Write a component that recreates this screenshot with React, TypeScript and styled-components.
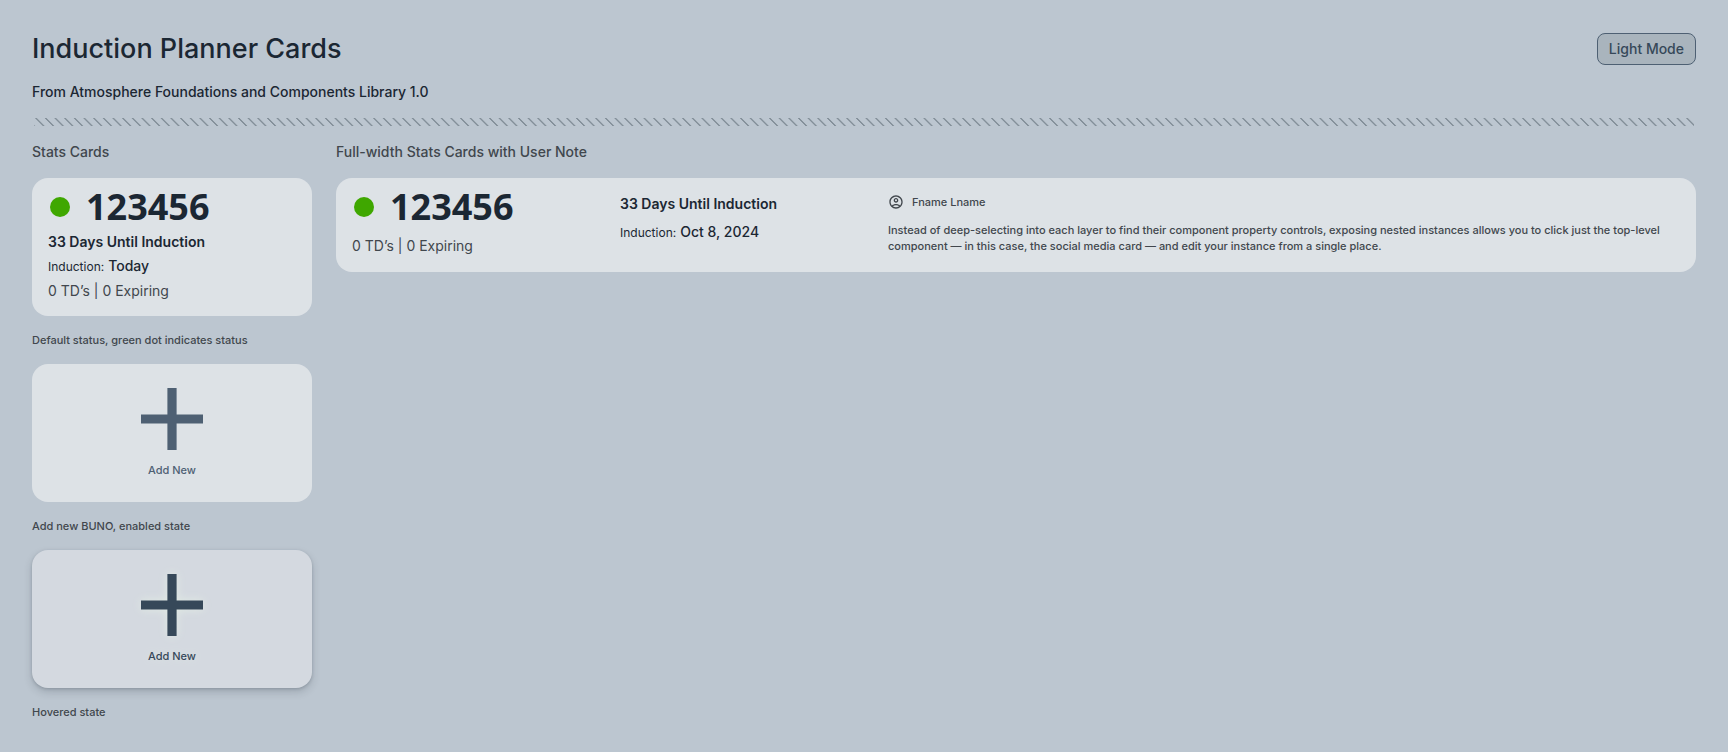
import React, { useId } from "react";
import styled, { createGlobalStyle, css } from "styled-components";

const color = {
  page: "#bcc6d0",
  card: "#dde2e6",
  cardHover: "#d4d9e0",
  ink: "#1b2733",
  muted: "#41474d",
  accent: "#4e6073",
  accentStrong: "#364859",
  status: "#3fa700",
};

const GlobalStyle = createGlobalStyle`
  *, *::before, *::after { box-sizing: border-box; }
  body {
    margin: 0;
    background: ${color.page};
    color: ${color.ink};
    font-family: Inter, "Noto Sans", sans-serif;
    font-size: 14px;
    line-height: 20px;
  }
  h1, h2, h3, p, figure { margin: 0; }
`;

const Page = styled.main`
  display: flex;
  flex-direction: column;
  gap: 16px;
  padding: 32px;
`;

const TitleRow = styled.header`
  display: flex;
  align-items: center;
  justify-content: space-between;
`;

const Title = styled.h1`
  font-size: 27px;
  font-weight: 500;
  line-height: 34px;
`;

const ModeButton = styled.button`
  height: 32px;
  padding: 0 11px;
  border: 1px solid ${color.accent};
  border-radius: 8px;
  background: #a9b4bd;
  color: ${color.accentStrong};
  font: inherit;
  font-weight: 500;
  cursor: pointer;
`;

const Subtitle = styled.p`
  font-weight: 500;
`;

const Divider = styled.div`
  padding: 0 2px;
`;

const HatchSvg = styled.svg`
  display: block;
  width: 100%;
  height: 8px;
`;

const Columns = styled.div`
  display: grid;
  grid-template-columns: 280px minmax(0, 1fr);
  gap: 24px;
  align-items: start;
`;

const Column = styled.section`
  display: flex;
  flex-direction: column;
  gap: 16px;
`;

const SectionTitle = styled.h2`
  color: ${color.muted};
  font-size: 14px;
  font-weight: 500;
`;

const Example = styled.figure`
  display: flex;
  flex-direction: column;
  gap: 16px;
`;

const Caption = styled.figcaption`
  color: ${color.muted};
  font-size: 11px;
  font-weight: 500;
  line-height: 16px;
`;

const cardSurface = css`
  border-radius: 16px;
  background: ${color.card};
`;

const StatsCard = styled.article`
  ${cardSurface}
  min-height: 138px;
  padding: 8px 16px 12px;
`;

const WideCard = styled.article`
  ${cardSurface}
  display: grid;
  grid-template-columns: 244px 244px minmax(0, 1fr);
  gap: 24px;
  min-height: 94px;
  padding: 8px 16px;
`;

const NumberRow = styled.div<{ $spacing: number }>`
  display: flex;
  align-items: center;
  gap: 16px;
  height: 42px;
  margin-bottom: ${(p) => p.$spacing}px;
  padding-left: 2px;
`;

const StatusDot = styled.span`
  width: 20px;
  height: 20px;
  border-radius: 50%;
  background: ${color.status};
`;

const BuNumber = styled.h3`
  font-family: "Noto Sans", sans-serif;
  font-size: 36px;
  font-weight: 700;
  line-height: 40px;
`;

const Countdown = styled.p`
  font-weight: 600;
  line-height: 24px;
`;

const DateLine = styled.p`
  display: flex;
  align-items: baseline;
  gap: 4px;
  font-size: 12px;
  line-height: 24px;
`;

const DateValue = styled.strong`
  font-size: 14px;
  font-weight: 500;
`;

const Totals = styled.p`
  color: ${color.muted};
  line-height: 24px;
`;

const InductionColumn = styled.div`
  display: flex;
  flex-direction: column;
  gap: 4px;
  padding-top: 6px;
`;

const NoteColumn = styled.div`
  display: flex;
  flex-direction: column;
  gap: 12px;
  padding-top: 8px;
  color: ${color.muted};
  font-size: 11px;
  font-weight: 500;
  line-height: 16px;
`;

const Author = styled.p`
  display: flex;
  align-items: center;
  gap: 8px;
`;

const AddCard = styled.button<{ $hovered?: boolean }>`
  ${cardSurface}
  display: flex;
  flex-direction: column;
  align-items: center;
  gap: 12px;
  height: 138px;
  padding: 24px 16px 0;
  border: 0;
  color: ${color.accent};
  font: inherit;
  font-size: 11px;
  font-weight: 500;
  line-height: 16px;
  cursor: pointer;

  ${(p) =>
    p.$hovered &&
    css`
      background: ${color.cardHover};
      box-shadow: 0 4px 8px rgba(27, 39, 51, 0.18), 0 1px 3px rgba(27, 39, 51, 0.18);
      color: ${color.accentStrong};
      text-shadow: 0 0 8px #dde6e2;

      svg {
        filter: drop-shadow(0 0 5px #e2ece4);
      }
    `}
`;

function HatchDivider() {
  const id = useId();
  return (
    <Divider>
      <HatchSvg aria-hidden="true">
        <defs>
          <pattern
            id={id}
            width="9.655"
            height="8"
            patternUnits="userSpaceOnUse"
            patternTransform="translate(0.8 0) skewX(45)"
          >
            <rect width="2" height="8" fill="#84909a" />
          </pattern>
        </defs>
        <rect width="100%" height="8" fill={`url(#${id})`} />
      </HatchSvg>
    </Divider>
  );
}

function PlusIcon() {
  return (
    <svg width="62" height="62" viewBox="0 0 62 62" fill="currentColor" aria-hidden="true">
      <path d="M26.4 0h9.2v26.4H62v9.2H35.6V62h-9.2V35.6H0v-9.2h26.4z" />
    </svg>
  );
}

function AccountIcon() {
  return (
    <svg width="16" height="16" viewBox="0 0 24 24" fill="currentColor" aria-hidden="true">
      <path d="M12 2C6.48 2 2 6.48 2 12s4.48 10 10 10 10-4.48 10-10S17.52 2 12 2zM7.35 18.5C8.66 17.56 10.26 17 12 17s3.34.56 4.65 1.5C15.34 19.44 13.74 20 12 20s-3.34-.56-4.65-1.5zm10.79-1.38C16.45 15.8 14.32 15 12 15s-4.45.8-6.14 2.12C4.7 15.73 4 13.95 4 12c0-4.42 3.58-8 8-8s8 3.58 8 8c0 1.95-.7 3.73-1.86 5.12zM12 6c-1.93 0-3.5 1.57-3.5 3.5S10.07 13 12 13s3.5-1.57 3.5-3.5S13.93 6 12 6zm0 5c-.83 0-1.5-.67-1.5-1.5S11.17 8 12 8s1.5.67 1.5 1.5S12.83 11 12 11z" />
    </svg>
  );
}

function NumberHeading({ value, spacing = 2 }: { value: string; spacing?: number }) {
  return (
    <NumberRow $spacing={spacing}>
      <StatusDot />
      <BuNumber>{value}</BuNumber>
    </NumberRow>
  );
}

function InductionDate({ value }: { value: string }) {
  return (
    <DateLine>
      Induction: <DateValue>{value}</DateValue>
    </DateLine>
  );
}

function AddNewCard({ hovered }: { hovered?: boolean }) {
  return (
    <AddCard type="button" $hovered={hovered}>
      <PlusIcon />
      Add New
    </AddCard>
  );
}

export default function App() {
  return (
    <>
      <GlobalStyle />
      <Page>
        <TitleRow>
          <Title>Induction Planner Cards</Title>
          <ModeButton type="button">Light Mode</ModeButton>
        </TitleRow>
        <Subtitle>From Atmosphere Foundations and Components Library 1.0</Subtitle>
        <HatchDivider />
        <Columns>
          <Column>
            <SectionTitle>Stats Cards</SectionTitle>
            <Example>
              <StatsCard>
                <NumberHeading value="123456" />
                <Countdown>33 Days Until Induction</Countdown>
                <InductionDate value="Today" />
                <Totals>0 TD’s | 0 Expiring</Totals>
              </StatsCard>
              <Caption>Default status, green dot indicates status</Caption>
            </Example>
            <Example>
              <AddNewCard />
              <Caption>Add new BUNO, enabled state</Caption>
            </Example>
            <Example>
              <AddNewCard hovered />
              <Caption>Hovered state</Caption>
            </Example>
          </Column>
          <Column>
            <SectionTitle>Full-width Stats Cards with User Note</SectionTitle>
            <WideCard>
              <div>
                <NumberHeading value="123456" spacing={6} />
                <Totals>0 TD’s | 0 Expiring</Totals>
              </div>
              <InductionColumn>
                <Countdown>33 Days Until Induction</Countdown>
                <InductionDate value="Oct 8, 2024" />
              </InductionColumn>
              <NoteColumn>
                <Author>
                  <AccountIcon />
                  Fname Lname
                </Author>
                <p>
                  Instead of deep-selecting into each layer to find their component property
                  controls, exposing nested instances allows you to click just the top-level
                  component — in this case, the social media card — and edit your instance from a
                  single place.
                </p>
              </NoteColumn>
            </WideCard>
          </Column>
        </Columns>
      </Page>
    </>
  );
}
